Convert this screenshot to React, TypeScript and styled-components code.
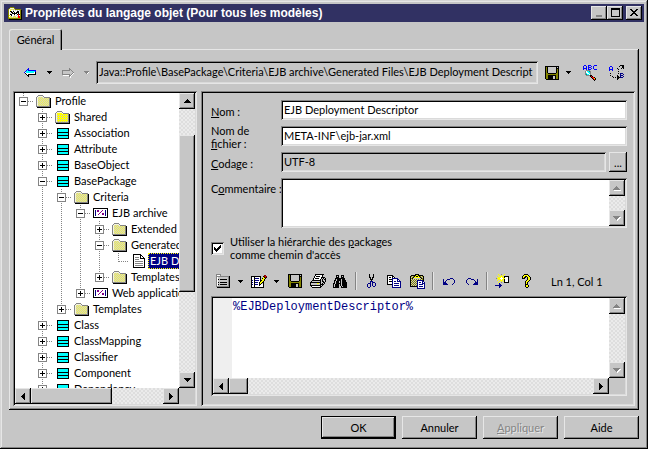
import React from "react";
import styled, { createGlobalStyle, css } from "styled-components";

const face = "#c6c6c6";
const light = "#e6e6e6";
const shade = "#848484";

const raised = css`
  background: ${face};
  box-shadow: inset -1px -1px #000, inset 1px 1px ${light}, inset -2px -2px ${shade};
`;
const sunken = css`
  box-shadow: inset 1px 1px ${shade}, inset -1px -1px ${light}, inset 2px 2px #000,
    inset -2px -2px #dadada;
`;

const GlobalStyle = createGlobalStyle`
  * { box-sizing: border-box; }
  body { margin: 0; background: ${face}; }
  body, button, input, textarea {
    font-family: Lato, "Liberation Sans", Arial, sans-serif;
    font-size: 11px;
    line-height: 13px;
    color: #000;
  }
  button { border: 0; padding: 0; background: none; }
  svg { display: block; flex: none; }
`;

/* ---------- pixel icons ---------- */

const palette: Record<string, string> = {
  K: "#000000", W: "#ffffff", C: "#c6c6c6", G: "#848484", Y: "#ffff00", O: "#848400",
  N: "#000084", B: "#0000ff", A: "#00ffff", T: "#008484", R: "#ff0000", M: "#840000",
  P: "#840084", L: "#f4f4e0", S: "#f0f050", Q: "#d2d2c6",
};

function Pix({ rows }: { rows: string[] }) {
  const paths: Record<string, string> = {};
  rows.forEach((row, y) => {
    let x = 0;
    while (x < row.length) {
      const pick = (i: number) =>
        row[i] === "D" ? ((i + y) % 2 ? "Y" : "C") : row[i] === "d" ? ((i + y) % 2 ? "S" : "Q") : row[i];
      const ch = pick(x);
      let end = x + 1;
      while (end < row.length && pick(end) === ch) end++;
      if (ch !== ".") paths[ch] = (paths[ch] || "") + `M${x} ${y}h${end - x}v1H${x}z`;
      x = end;
    }
  });
  const w = Math.max(...rows.map((r) => r.length));
  return (
    <svg width={w} height={rows.length} viewBox={`0 0 ${w} ${rows.length}`} shapeRendering="crispEdges" aria-hidden="true">
      {Object.entries(paths).map(([ch, d]) => (
        <path key={ch} d={d} fill={palette[ch]} />
      ))}
    </svg>
  );
}

const icons = {
  app: [
    "..OOOO........", ".OLLLLO.......", "OLDDDDDOOOOOO.", "OWDWWDWDWDWDOK", "OWKKWKWWWKKWOK",
    "OWWKKWKWKKKWOK", "OWDWKKKKKWKWOK", "OWKKWWKWWKRKOK", "ODWKWWDWDWRWOK", "OWDDWDDDWDRROK",
    "ODDDDDDDDDRROK", "OOOOOOOOOOOOOK", ".KKKKKKKKKKKKK",
  ],
  back: [
    "....B.......", "...BB.......", "..BABBBBBBBB", ".BAAAAAAAAAB", "BWAAAAAAAAWK",
    ".KWWWWWWWWWK", "..KWKKKKKKKK", "...KK.......", "....K.......",
  ],
  forward: [
    ".......G.....", ".......GG....", "GGGGGGGGCG...", "GCCCCCCCCCG..", "GCCCCCCCCCCG.",
    "GCCCCCCCCCGW.", "GGGGGGGGCGW..", ".WWWWWWGGW...", ".......GW....", "........W....",
  ],
  disk: [
    "KKKKKKKKKKKKKK", "KOKCCCCCCCCKCK", "KOKCCCCCCCCKKK", "KOKCCCCCCCCKOK", "KOKCCCCCCCCKOK",
    "KOKCCCCCCCCKOK", "KOKCCCCCCCCKOK", "KOOKKKKKKKKOOK", "KOOOOOOOOOOOOK", "KOOKKKKKKKKOOK",
    "KOOKKKKKCCKOOK", "KOOKKKKKCCKOOK", "KOOKKKKKCCKOOK", ".KKKKKKKKKKKKK",
  ],
  abc: [
    ".BB..BBB...BBB", "B..B.B..B.B...", "B..B.BBB..B...", "BBBB.B..B.B...", "B..B.BBB...BBB",
    "...GGGG.......", "..GWAATG......", "..GWWAAG......", "..GAWWAG......", "..GTAAWG......",
    "...GGGGKK.....", ".......KRK....", "........KRRK..", ".........KRYK.", "..........KRK.",
    "...........K..",
  ],
  ab: [
    "............KKKK", "..BB.......K..KK", ".B..B.........KK", ".B..B....K...K.K", ".BBBB.....K.....",
    ".B..B...........", "..........K.....", "................", "..K.......K.NNN.", "............N..N",
    "..K......K..NNN.", "....K....KK.N..N", ".....K.K.KKKNNN.", ".........KK.....", ".........K......",
  ],
  folder: [
    "..GGGGG........", ".GLLLLLG.......", "GLdddddLGGGGGG.", "GLdddddddddddGK", "GLdddddddddddGK",
    "GLdddddddddddGK", "GLdddddddddddGK", "GLdddddddddddGK", "GLdddddddddddGK", "GLdddddddddddGK",
    "GLdddddddddddGK", "GGGGGGGGGGGGGGK", ".KKKKKKKKKKKKKK",
  ],
  shared: [
    "..GGGGG........", ".GLLLLLG.......", "GLYYYYYLGGGGGG.", "GLYYYYYYYYYYYGK", "GLDDDDDDDDDDDGK",
    "GLYYYYYYYYYYYGK", "GLDDDDDDDDDDDGK", "GLYYYYYYYYYYYGK", "GLDDDDDDDDDDDGK", "GLYYYYYYYYYYYGK",
    "GLDDDDDDDDDDDGK", "GGGGGGGGGGGGGGK", ".KKKKKKKKKKKKKK",
  ],
  cls: [
    "KKKKKKKKKKKK", "KAAAAAAAAAAK", "KAAAAAAAAAAK", "KAAAAAAAAAAK", "KKKKKKKKKKKK", "KAAAAAAAAAAK",
    "KAAAAAAAAAAK", "KKKKKKKKKKKK", "KAAAAAAAAAAK", "KAAAAAAAAAAK", "KKKKKKKKKKKK",
  ],
  tpl: [
    "KKKKKKKKKKKKKKK", "KWWWWWWWWWWWWWK", "KWNWPPWWWPWWNWK", "KWNWPPWWPWWWNWK", "KWNWWWWPWWWWNWK",
    "KWNWWWPWWPPWNWK", "KWNWWPWWWPPWNWK", "KWNWWWWWWWWWNWK", "KWWWWWWWWWWWWWK", "KKKKKKKKKKKKKKK",
  ],
  doc: [
    "KKKKKKKK....", "KWWWWWWKK...", "KWWWWWWKWK..", "KWGGGGWKWWK.", "KWWWWWWKKKKK", "KWGGGGWWWWWK",
    "KWWWWWWWWWWK", "KWGGGGGGGGWK", "KWWWWWWWWWWK", "KWGGGGGGGGWK", "KWWWWWWWWWWK", "KWGGGGGGGGWK",
    "KWWWWWWWWWWK", "KKKKKKKKKKKK",
  ],
  list: [
    "GGGGG.........", "GWWWG.........", "GGGGGGGGGGGGGK", "GWCCCCCCCCCCGK", "GWCCCCCCCCCCGK",
    "GWKCKKKKKKKCGK", "GWCCCCCCCCCCGK", "GWCCCCCCCCCCGK", "GWKCKKKKKKKCGK", "GWCCCCCCCCCCGK",
    "GWKCKKKKKKKCGK", "GWCCCCCCCCCCGK", "GGGGGGGGGGGGGK", ".KKKKKKKKKKKKK",
  ],
  edit: [
    ".............MM.", "KKKKKKKKKK..KMRM", "KWWKWWWWWK..YKMK", "KWWKNNNNWK.KYYK.", "KWWKWWWWWK.YYK..",
    "KNWKNNNNWKKYYK..", "KWWKWWWWWKYYK...", "KNWKNNNWKYYKK...", "KWWKWWWWKYK.K...", "KNWKNNNWKKWWK...",
    "KWWKWWWWKWWWK...", "KWWKWWWWWWWWK...", "KKKKKKKKKKKKK...",
  ],
  print: [
    ".....KKKKKKKKK..", ".....KWWWWWWK...", "....KWKKKKWWK...", "....KWWWWWWKKKK.", "...KWKKKKWWKCKCK",
    "...KWWWWWWKCKCKK", "..KKKKKKKKKCKCCK", ".KCCCCCCCCKCKKCK", "KKKKKKKKKKKCCKK.", "KCCCCCCYYCKCKCK.",
    "KCCCCCCCCCKKKK..", "KKKKKKKKKKKCK...", ".KWWWWWWWWKK....", "..KKKKKKKKK.....",
  ],
  find: [
    "...KKK..KKK....", "...KCK..KCK....", "...KKK..KKK....", "..KKKKKKKKKK...", "..KCKKKKCKKK...",
    ".KKCKKKKCKKKK..", ".KCKKKCKCKKKK..", ".KCKKKCKCKKKKK.", "KKCKKKKKCKKKKK.", "KCKKKK.KCKKKKK.",
    "KCKKKK.KCKKKKK.", "KCKKKK..KCKKKK.", "KKKKKK..KKKKKK.",
  ],
  cut: [
    "..K...K..", "..K...K..", "..K...K..", "..KK.KK..", "...K.K...", "...KKK...", "....K....",
    "...NNN...", "...N.NNN.", ".NNN.N..N", "N..N.N..N", "N..N.N..N", "N..N..NN.", ".NN......",
  ],
  copy: [
    "KKKKKK.........", "KWWWWKK........", "KWKKWKWK.......", "KWWWWNNNNNN....", "KWKKKNWWWWNN...",
    "KWWWWNWWWWNWN..", "KWKKKNWNNWNNNN.", "KWWWWNWWWWWWWN.", "KWWWWNWNNNNNWN.", "KKKKKNWWWWWWWN.",
    ".....NWNNNNNWN.", ".....NWWWWWWWN.", ".....NNNNNNNNN.",
  ],
  paste: [
    ".....KKKK......", ".KKKKKYYKKKKK..", "KOCOKYKKYKOCOK.", "KCOKYYYYYYKOCK.", "KOKCCCCCCCCKOK.",
    "KCOCOCOCOCOCOK.", "KOCOCOCNNNNNNK.", "KCOCOCONWWWWNN.", "KOCOCOCNWNNWNWN", "KCOCOCONWWWWNNN",
    "KOCOCOCNWNNNNWN", "KCOCOCONWWWWWWN", "KKKKKKKNWNNNNWN", ".......NWWWWWWN", ".......NNNNNNNN",
  ],
  undo: [
    ".......NNN..", "N...NNN...N.", "N..N.......N", "N.N........N", "NNN........N",
    "NNNN......N.", "NNNNN....N..",
  ],
  redo: [
    "..NNN.......", ".N...NNN...N", "N.......N..N", "N........N.N", "N........NNN",
    ".N......NNNN", "..N....NNNNN",
  ],
  insert: [
    "...Y..G..Y.....", "....Y.Y.Y......", "..Y..YYY.KKKKK.", "...YYYWYYKWWWK.", ".GYYYWWWYYWWWK.",
    "...YYYWYYKWWWK.", "..Y..YYY.KWWWK.", "....Y.Y.YKWWWK.", "...Y..G..KKKKK.", "....N..........",
    "....NN.........", "NNNNNNN........", "....NN.........", "....N..........",
  ],
  help: [
    "...KKKK...", "..KYYYYK..", ".KYYKKYYK.", ".KYKK.KYYK", ".KKK..KYYK", "......KYYK", ".....KYYK.",
    "....KYYK..", "....KYK...", "....KYK...", "....KKK...", "....KYYK..", "....KYYK..", ".....KK...",
  ],
  down: ["KKKKK", ".KKK.", "..K.."],
  downGrey: ["GGGGG.", ".GGGW.", "..GW.."],
  up: ["...K...", "..KKK..", ".KKKKK.", "KKKKKKK"],
  dn: ["KKKKKKK", ".KKKKK.", "..KKK..", "...K..."],
  upGrey: ["...G....", "..GGG...", ".GGGGG..", "GGGGGGG.", ".WWWWWWW"],
  dnGrey: ["GGGGGGG.", ".GGGGGWW", "..GGGWW.", "...GWW..", "....W..."],
  left: ["...K", "..KK", ".KKK", "KKKK", ".KKK", "..KK", "...K"],
  right: ["K...", "KK..", "KKK.", "KKKK", "KKK.", "KK..", "K..."],
  min: ["GGGGGG", "GGGGGG"],
  max: ["KKKKKKKKK", "KKKKKKKKK", "K.......K", "K.......K", "K.......K", "K.......K", "K.......K", "K.......K", "KKKKKKKKK"],
  close: ["KK....KK", ".KK..KK.", "..KKKK..", "...KK...", "..KKKK..", ".KK..KK.", "KK....KK"],
  plus: ["GGGGGGGGG", "GWWWWWWWG", "GWWWKWWWG", "GWWWKWWWG", "GWKKKKKWG", "GWWWKWWWG", "GWWWKWWWG", "GWWWWWWWG", "GGGGGGGGG"],
  minus: ["GGGGGGGGG", "GWWWWWWWG", "GWWWWWWWG", "GWWWWWWWG", "GWKKKKKWG", "GWWWWWWWG", "GWWWWWWWG", "GWWWWWWWG", "GGGGGGGGG"],
};
type IconName = keyof typeof icons;
const Icon = ({ name }: { name: IconName }) => <Pix rows={icons[name]} />;

/* ---------- window ---------- */

const Window = styled.main`
  display: flex;
  flex-direction: column;
  height: 100vh;
  padding: 4px;
  background: ${face};
  box-shadow: inset -1px -1px #000, inset 1px 1px #d6d6d6, inset -2px -2px ${shade}, inset 2px 2px ${light};
`;
const TitleBar = styled.header`
  display: flex;
  align-items: center;
  flex: none;
  height: 18px;
  padding: 0 2px 0 4px;
  gap: 3px;
  background: #313163;
  color: #fff;
`;
const Title = styled.h1`
  flex: 1;
  margin: 0;
  font-family: "Liberation Sans", Arial, sans-serif;
  font-size: 12px;
  font-weight: bold;
  white-space: nowrap;
`;
const CaptionGroup = styled.div`
  display: flex;
`;
const CaptionButton = styled.button<{ $low?: boolean }>`
  ${raised}
  display: flex;
  justify-content: center;
  align-items: ${(p) => (p.$low ? "flex-end" : "center")};
  width: 16px;
  height: 14px;
  padding-bottom: ${(p) => (p.$low ? 3 : 1)}px;
`;
const Body = styled.div`
  display: flex;
  flex-direction: column;
  flex: 1;
  min-height: 0;
  padding: 7px 5px 6px;
`;
const TabList = styled.div`
  display: flex;
  flex: none;
`;
const Tab = styled.button`
  position: relative;
  z-index: 1;
  width: 53px;
  height: 21px;
  margin-bottom: -1px;
  background: ${face};
  border-radius: 2px 2px 0 0;
  box-shadow: inset 1px 1px ${light}, inset -1px 0 #000, inset -2px 0 ${shade};
`;
const TabPanel = styled.section`
  display: flex;
  flex-direction: column;
  flex: 1;
  min-height: 0;
  padding: 12px 4px 4px;
  box-shadow: inset -1px -1px #000, inset 1px 1px ${light}, inset -2px -2px ${shade};
`;

const PathBar = styled.div`
  display: flex;
  align-items: center;
  flex: none;
  height: 23px;
  margin-bottom: 7px;
  padding-right: 12px;
`;
const ToolButton = styled.button<{ $w?: number }>`
  display: flex;
  align-items: center;
  justify-content: center;
  flex: none;
  width: ${(p) => p.$w ?? 23}px;
  height: 22px;
`;
const PathField = styled.input`
  ${sunken}
  flex: 1;
  min-width: 0;
  height: 23px;
  margin: 0 1px 0 7px;
  padding: 0 3px 2px;
  border: 0;
  background: ${face};
`;

const Split = styled.div`
  display: grid;
  grid-template-columns: 184px minmax(0, 1fr);
  gap: 4px;
  flex: 1;
  min-height: 0;
`;

/* ---------- scroll bars ---------- */

const Bar = styled.div<{ $dir: "row" | "column" }>`
  display: flex;
  flex-direction: ${(p) => p.$dir};
  flex: none;
  background: repeating-conic-gradient(#dedede 0 25%, #ebebeb 0 50%) 0 0 / 4px 4px;
  ${(p) => (p.$dir === "row" ? "height: 16px;" : "width: 16px;")}
`;
const Arrow = styled.button`
  ${raised}
  display: flex;
  align-items: center;
  justify-content: center;
  flex: none;
  width: 16px;
  height: 16px;
`;
const Span = styled.div<{ $grow: number }>`
  flex: ${(p) => p.$grow} 1 0;
`;
const Thumb = styled(Span)`
  ${raised}
`;
type ScrollProps = { dir: "row" | "column"; parts?: [number, number, number]; disabled?: boolean };
function ScrollBar({ dir, parts, disabled }: ScrollProps) {
  const col = dir === "column";
  return (
    <Bar $dir={dir}>
      <Arrow type="button" tabIndex={-1} disabled={disabled} aria-label={col ? "Haut" : "Gauche"}>
        <Icon name={col ? (disabled ? "upGrey" : "up") : "left"} />
      </Arrow>
      {parts ? (
        <>
          <Span $grow={parts[0]} />
          <Thumb $grow={parts[1]} />
          <Span $grow={parts[2]} />
        </>
      ) : (
        <Span $grow={1} />
      )}
      <Arrow type="button" tabIndex={-1} disabled={disabled} aria-label={col ? "Bas" : "Droite"}>
        <Icon name={col ? (disabled ? "dnGrey" : "dn") : "right"} />
      </Arrow>
    </Bar>
  );
}
const ScrollFrame = styled.div`
  ${sunken}
  display: grid;
  grid-template-columns: minmax(0, 1fr) 16px;
  grid-template-rows: minmax(0, 1fr) auto;
  min-height: 0;
  padding: 2px;
  background: ${face};
`;

/* ---------- tree ---------- */

const Tree = styled.ul`
  margin: 0;
  padding: 0;
  overflow: hidden;
  list-style: none;
  background: #fff;
`;
const Row = styled.li`
  display: flex;
  align-items: center;
  height: 16px;
  white-space: nowrap;
`;
type Line = "full" | "half" | "none";
const dots = (to: string) => `repeating-linear-gradient(${to}, ${shade} 0 1px, transparent 1px 2px)`;
const Guide = styled.span<{ $line: Line; $branch?: boolean }>`
  display: flex;
  align-items: center;
  flex: none;
  width: 19px;
  height: 16px;
  padding-left: 4px;
  background-image: ${dots("to bottom")}, ${dots("to right")};
  background-repeat: no-repeat;
  background-position: 8px 0, 9px 8px;
  background-size: ${(p) => (p.$line === "none" ? "0 0" : p.$line === "half" ? "1px 9px" : "1px 16px")},
    ${(p) => (p.$branch ? "10px 1px" : "0 0")};
`;
const Toggle = styled.button`
  display: block;
  width: 9px;
  height: 9px;
`;
const NodeIcon = styled.span`
  display: flex;
  justify-content: center;
  flex: none;
  width: 19px;
`;
const NodeLabel = styled.span<{ $selected?: boolean }>`
  padding: 1px 2px;
  line-height: 14px;
  ${(p) => p.$selected && css`
    background: #000084;
    color: #fff;
    outline: 1px dotted #ffff00;
    outline-offset: -1px;
  `}
`;
type Node = { label: string; icon: IconName; guides: string; open?: boolean | null; selected?: boolean };
/* guides: one letter per level, f = full line, h = upper half, n = none */
const nodes: Node[] = [
  { label: "Profile", icon: "folder", guides: "h", open: true },
  { label: "Shared", icon: "shared", guides: "nf" },
  { label: "Association", icon: "cls", guides: "nf" },
  { label: "Attribute", icon: "cls", guides: "nf" },
  { label: "BaseObject", icon: "cls", guides: "nf" },
  { label: "BasePackage", icon: "cls", guides: "nf", open: true },
  { label: "Criteria", icon: "folder", guides: "nff", open: true },
  { label: "EJB archive", icon: "tpl", guides: "nfff", open: true },
  { label: "Extended Attributes", icon: "folder", guides: "nffff" },
  { label: "Generated Files", icon: "folder", guides: "nffff", open: true },
  { label: "EJB Deployment Descriptor", icon: "doc", guides: "nffffh", open: null, selected: true },
  { label: "Templates", icon: "folder", guides: "nfffh" },
  { label: "Web application", icon: "tpl", guides: "nffh" },
  { label: "Templates", icon: "folder", guides: "nfh" },
  { label: "Class", icon: "cls", guides: "nf" },
  { label: "ClassMapping", icon: "cls", guides: "nf" },
  { label: "Classifier", icon: "cls", guides: "nf" },
  { label: "Component", icon: "cls", guides: "nf" },
  { label: "Dependency", icon: "cls", guides: "nf" },
];
const lineOf: Record<string, Line> = { f: "full", h: "half", n: "none" };

function TreeRow({ node }: { node: Node }) {
  const levels = node.guides.split("");
  const own = levels.pop() as string;
  return (
    <Row role="treeitem" aria-level={levels.length + 1} aria-selected={!!node.selected}>
      {levels.map((g, i) => (
        <Guide key={i} $line={lineOf[g]} />
      ))}
      <Guide $line={lineOf[own]} $branch>
        {node.open !== null && (
          <Toggle type="button" aria-label={node.open ? "Réduire" : "Développer"}>
            <Icon name={node.open ? "minus" : "plus"} />
          </Toggle>
        )}
      </Guide>
      <NodeIcon>
        <Icon name={node.icon} />
      </NodeIcon>
      <NodeLabel $selected={node.selected}>{node.label}</NodeLabel>
    </Row>
  );
}

/* ---------- form ---------- */

const Form = styled.form`
  ${sunken}
  display: flex;
  flex-direction: column;
  min-height: 0;
  padding: 9px 8px 10px 10px;
`;
const Fields = styled.div`
  display: grid;
  grid-template-columns: 70px minmax(0, 1fr);
  grid-template-rows: 20px 20px 20px 50px;
  gap: 6px 0;
  flex: none;
`;
const Label = styled.label<{ $top?: boolean }>`
  align-self: ${(p) => (p.$top ? "start" : "center")};
  padding-top: ${(p) => (p.$top ? 4 : 2)}px;
  white-space: nowrap;
`;
const TextField = styled.input`
  ${sunken}
  width: 100%;
  min-width: 0;
  height: 20px;
  padding: 0 3px 1px;
  border: 0;
  background: #fff;
  &:read-only { background: ${face}; }
`;
const WithButton = styled.div`
  display: flex;
  gap: 3px;
`;
const MoreButton = styled.button`
  ${raised}
  flex: none;
  width: 18px;
  height: 20px;
`;
const Area = styled.textarea`
  display: block;
  width: 100%;
  height: 100%;
  padding: 1px 3px;
  border: 0;
  resize: none;
  overflow: hidden;
  background: #fff;
`;
const CheckRow = styled.label`
  display: flex;
  align-items: center;
  flex: none;
  gap: 6px;
  margin-top: 7px;
`;
const Check = styled.input`
  ${sunken}
  appearance: none;
  flex: none;
  width: 13px;
  height: 13px;
  margin: 0;
  background: #fff;
  &:checked {
    background: #fff
      url("data:image/svg+xml,%3Csvg xmlns='http://www.w3.org/2000/svg' width='7' height='7' shape-rendering='crispEdges'%3E%3Cpath d='M0 2h1v1h1v1h1v-1h1v-1h1v-1h1v-1h1v3h-1v1h-1v1h-1v1h-1v1h-1v-1h-1v-1h-1z'/%3E%3C/svg%3E")
      center / 7px 7px no-repeat;
  }
`;
const EditorBar = styled.div`
  display: flex;
  align-items: center;
  flex: none;
  height: 28px;
  margin: 6px 0 1px;
`;
const Separator = styled.span`
  flex: none;
  width: 2px;
  height: 18px;
  margin: 0 3px;
  background: linear-gradient(to right, ${shade} 50%, ${light} 50%);
`;
const Position = styled.output`
  margin-left: 14px;
  white-space: nowrap;
`;
const EditorFrame = styled(ScrollFrame)`
  flex: 1;
`;
const Code = styled(Area)`
  padding: 3px 2px 3px 20px;
  background: linear-gradient(to right, #efefef 19px, #fff 19px);
  color: #000084;
  font-family: "Liberation Mono", "Courier New", monospace;
  font-size: 12px;
  white-space: pre;
`;

const Footer = styled.footer`
  display: flex;
  justify-content: flex-end;
  flex: none;
  gap: 6px;
  margin-top: 6px;
`;
const PushButton = styled.button<{ $primary?: boolean }>`
  ${raised}
  width: 75px;
  height: 23px;
  ${(p) => p.$primary && css`
    border: 1px solid #000;
  `}
  &:disabled {
    color: ${shade};
    text-shadow: 1px 1px ${light};
  }
`;

type Tool = { icon: IconName; label: string; w?: number } | null;
const tools: Tool[] = [
  { icon: "list", label: "Menu" },
  { icon: "down", label: "Options du menu", w: 13 },
  { icon: "edit", label: "Éditer" },
  { icon: "down", label: "Éditer avec", w: 13 },
  { icon: "disk", label: "Enregistrer" },
  { icon: "print", label: "Imprimer" },
  { icon: "find", label: "Rechercher" },
  null,
  { icon: "cut", label: "Couper" },
  { icon: "copy", label: "Copier" },
  { icon: "paste", label: "Coller" },
  null,
  { icon: "undo", label: "Annuler la frappe" },
  { icon: "redo", label: "Rétablir" },
  null,
  { icon: "insert", label: "Insérer" },
  { icon: "help", label: "Aide de l'éditeur" },
];

export default function App() {
  return (
    <>
      <GlobalStyle />
      <Window>
        <TitleBar>
          <Icon name="app" />
          <Title>Propriétés du langage objet (Pour tous les modèles)</Title>
          <CaptionGroup>
            <CaptionButton aria-label="Réduire la fenêtre" $low><Icon name="min" /></CaptionButton>
            <CaptionButton aria-label="Agrandir"><Icon name="max" /></CaptionButton>
          </CaptionGroup>
          <CaptionButton aria-label="Fermer"><Icon name="close" /></CaptionButton>
        </TitleBar>
        <Body>
          <TabList role="tablist">
            <Tab role="tab" aria-selected="true">Général</Tab>
          </TabList>
          <TabPanel role="tabpanel">
            <PathBar>
              <ToolButton $w={34} aria-label="Précédent"><Icon name="back" /></ToolButton>
              <ToolButton $w={4} aria-label="Historique précédent"><Icon name="down" /></ToolButton>
              <ToolButton $w={34} aria-label="Suivant" disabled><Icon name="forward" /></ToolButton>
              <ToolButton $w={4} aria-label="Historique suivant" disabled><Icon name="downGrey" /></ToolButton>
              <PathField
                readOnly
                aria-label="Chemin"
                defaultValue="Java::Profile\BasePackage\Criteria\EJB archive\Generated Files\EJB Deployment Descript"
              />
              <ToolButton $w={26} aria-label="Enregistrer le langage"><Icon name="disk" /></ToolButton>
              <ToolButton $w={7} aria-label="Options d'enregistrement"><Icon name="down" /></ToolButton>
              <ToolButton $w={36} aria-label="Rechercher du texte"><Icon name="abc" /></ToolButton>
              <ToolButton $w={15} aria-label="Remplacer du texte"><Icon name="ab" /></ToolButton>
            </PathBar>
            <Split>
              <ScrollFrame>
                <Tree role="tree">
                  {nodes.map((n, i) => <TreeRow key={i} node={n} />)}
                </Tree>
                <ScrollBar dir="column" parts={[26, 157, 80]} />
                <ScrollBar dir="row" parts={[0, 81, 51]} />
              </ScrollFrame>
              <Form onSubmit={(e) => e.preventDefault()}>
                <Fields>
                  <Label htmlFor="nom"><u>N</u>om :</Label>
                  <TextField id="nom" defaultValue="EJB Deployment Descriptor" />
                  <Label htmlFor="fichier">Nom de<br /><u>f</u>ichier :</Label>
                  <TextField id="fichier" defaultValue="META-INF\ejb-jar.xml" />
                  <Label htmlFor="codage"><u>C</u>odage :</Label>
                  <WithButton>
                    <TextField id="codage" readOnly defaultValue="UTF-8" />
                    <MoreButton type="button" aria-label="Choisir le codage">...</MoreButton>
                  </WithButton>
                  <Label htmlFor="commentaire" $top>C<u>o</u>mmentaire :</Label>
                  <ScrollFrame>
                    <Area id="commentaire" />
                    <ScrollBar dir="column" disabled />
                  </ScrollFrame>
                </Fields>
                <CheckRow>
                  <Check type="checkbox" defaultChecked />
                  <span>Utiliser la hiérarchie des <u>p</u>ackages<br />comme chemin d'accès</span>
                </CheckRow>
                <EditorBar role="toolbar" aria-label="Éditeur">
                  {tools.map((t, i) =>
                    t ? (
                      <ToolButton key={i} type="button" $w={t.w} aria-label={t.label}><Icon name={t.icon} /></ToolButton>
                    ) : (
                      <Separator key={i} />
                    )
                  )}
                  <Position>Ln 1, Col 1</Position>
                </EditorBar>
                <EditorFrame>
                  <Code aria-label="Modèle" spellCheck={false} defaultValue="%EJBDeploymentDescriptor%" />
                  <ScrollBar dir="column" disabled />
                  <ScrollBar dir="row" parts={[0, 19, 344]} />
                </EditorFrame>
              </Form>
            </Split>
          </TabPanel>
          <Footer>
            <PushButton $primary>OK</PushButton>
            <PushButton>Annuler</PushButton>
            <PushButton disabled><u>A</u>ppliquer</PushButton>
            <PushButton>Aide</PushButton>
          </Footer>
        </Body>
      </Window>
    </>
  );
}
